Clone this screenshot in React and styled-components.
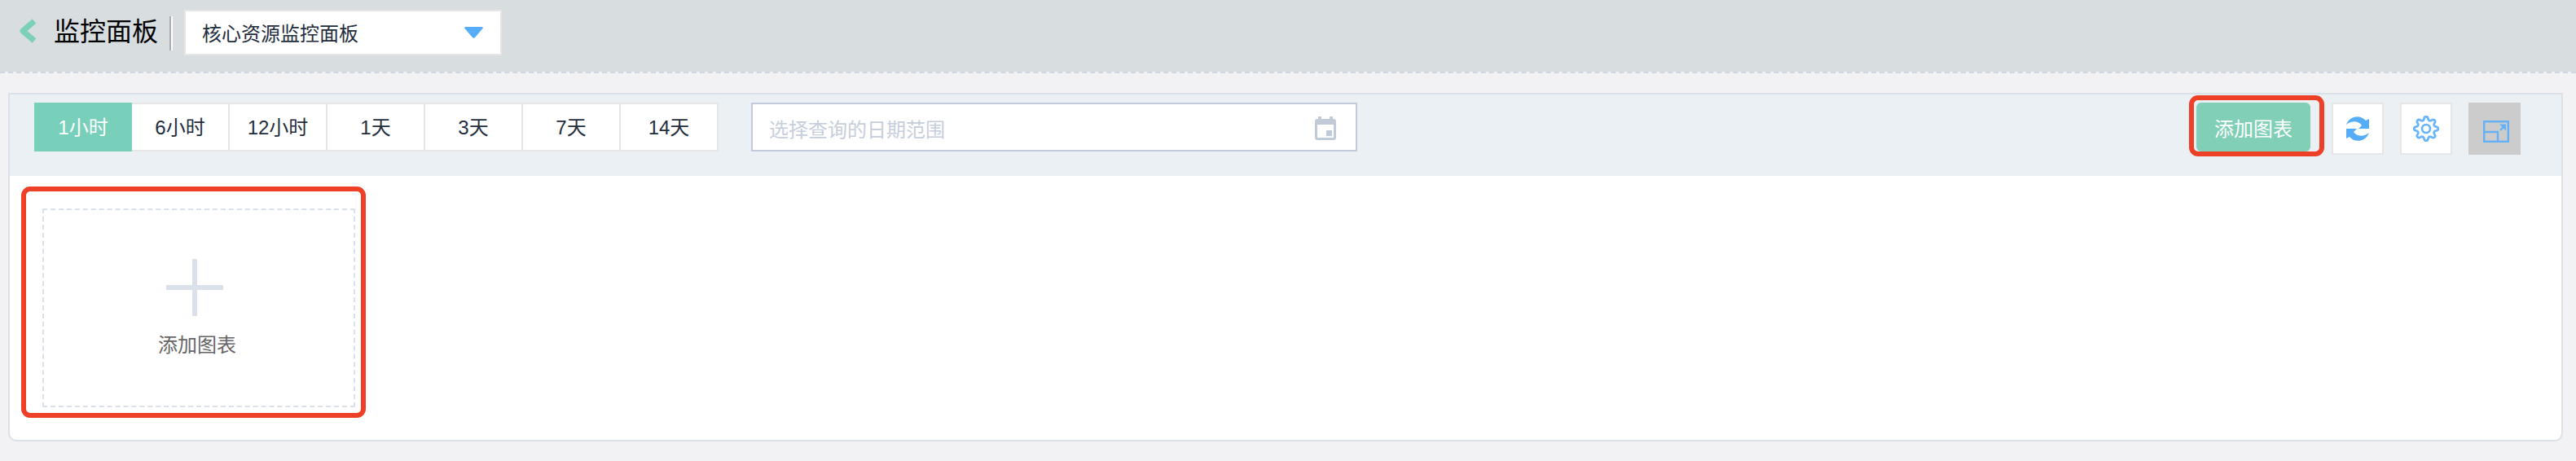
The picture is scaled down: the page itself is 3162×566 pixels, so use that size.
import React from "react";
import styled, { createGlobalStyle } from "styled-components";

const Global = createGlobalStyle`
  * { box-sizing: border-box; }
  body {
    margin: 0;
    background: #f2f2f4;
    font-family: "Liberation Sans", "Noto Sans CJK SC", sans-serif;
    font-size: 24px;
    color: #1f2d3d;
  }
  button { font: inherit; color: inherit; padding: 0; }
  svg { display: block; }
`;

const Page = styled.div`
  height: 566px;
  overflow: hidden;
`;

const Header = styled.header`
  display: flex;
  align-items: flex-start;
  height: 90px;
  padding: 12px 0 0 22px;
  background: #d8dde0 padding-box;
  border-bottom: 2px dashed #d0d7e0;
`;

const BackButton = styled.button`
  margin-top: 11px;
  width: 24px;
  height: 30px;
  border: 0;
  background: none;
`;

const Title = styled.h1`
  margin: 3px 0 0 20px;
  width: 128px;
  font-size: 32px;
  line-height: 48px;
  font-weight: 400;
  color: #000;
  white-space: nowrap;
`;

const Divider = styled.span`
  width: 4px;
  height: 42px;
  margin: 8px 14px 0 14px;
  border-left: 2px solid #a9adb0;
  border-right: 2px solid #fff;
`;

const Select = styled.div`
  display: flex;
  align-items: center;
  justify-content: space-between;
  width: 390px;
  height: 56px;
  padding: 0 21px 1px 20px;
  background: #fff;
  border: 2px solid #e6e6e8;
`;

const Panel = styled.main`
  height: 428px;
  margin: 24px 16px 0 10px;
  background: #fff;
  border: 2px solid #dae1e8;
  border-radius: 0 0 10px 10px;
`;

const Toolbar = styled.div`
  display: flex;
  align-items: flex-start;
  height: 100px;
  padding: 10px 50px 0 30px;
  background: #eaf0f4;
`;

const Segments = styled.div`
  display: flex;
`;

const Segment = styled.button`
  width: 120px;
  height: 60px;
  padding-bottom: 3px;
  border: 2px solid ${(p) => (p.$active ? "#78d0ba" : "#e6e6e6")};
  border-left-width: ${(p) => (p.$active ? "2px" : "0")};
  background: ${(p) => (p.$active ? "#78d0ba" : "#fff")};
  color: ${(p) => (p.$active ? "#fff" : "#1f2d3d")};
`;

const DateInput = styled.div`
  display: flex;
  align-items: center;
  justify-content: space-between;
  width: 744px;
  height: 60px;
  margin-left: 40px;
  padding: 2px 24px 0 20px;
  background: #fff;
  border: 2px solid #c0cad8;
  color: #c6cedb;
`;

const Actions = styled.div`
  display: flex;
  align-items: flex-start;
  gap: 20px;
  margin-left: auto;
`;

const Callout = styled.div`
  position: relative;
  &::after {
    content: "";
    position: absolute;
    inset: ${(p) => p.$inset};
    border: 6px solid #ee4026;
    border-radius: 11px;
    pointer-events: none;
  }
`;

const PrimaryButton = styled.button`
  display: block;
  width: 140px;
  height: 60px;
  margin-right: 6px;
  border: 0;
  border-radius: 6px;
  background: #80cfb6;
  color: #fff;
`;

const IconButton = styled.button`
  display: flex;
  align-items: center;
  justify-content: center;
  width: 64px;
  height: 64px;
  padding-top: ${(p) => (p.$active ? "6px" : "0")};
  padding-left: ${(p) => (p.$active ? "4px" : "0")};
  border: 2px solid ${(p) => (p.$active ? "#ccc" : "#e6e6e6")};
  background: ${(p) => (p.$active ? "#ccc" : "#fff")};
`;

const Content = styled.section`
  display: flex;
  padding: 40px;
`;

const AddCard = styled.div`
  display: flex;
  flex-direction: column;
  align-items: center;
  width: 384px;
  height: 244px;
  padding-top: 60px;
  border: 2px dashed #dae1ea;
  color: #666;
`;

const PlusIcon = styled.svg`
  margin-right: 10px;
`;

const CardLabel = styled.span`
  margin: 18px 4px 0 0;
  line-height: 36px;
`;

const ranges = ["1小时", "6小时", "12小时", "1天", "3天", "7天", "14天"];

const gearPath = (() => {
  const points = [];
  const steps = 96;
  for (let i = 0; i < steps; i++) {
    const a = (i / steps) * Math.PI * 2;
    const wave = Math.tanh(1.6 * Math.cos(8 * a)) / Math.tanh(1.6);
    const r = 12.7 + 2 * wave;
    points.push(`${(16 + r * Math.sin(a)).toFixed(2)} ${(16 - r * Math.cos(a)).toFixed(2)}`);
  }
  return `M${points.join("L")}Z`;
})();

export default function App() {
  return (
    <Page>
      <Global />
      <Header>
        <BackButton aria-label="返回">
          <svg width="24" height="30" viewBox="0 0 24 30" fill="none" stroke="#7dd0b8" strokeWidth="7">
            <path d="M20 3 6 15 20 27" strokeLinejoin="round" />
          </svg>
        </BackButton>
        <Title>监控面板</Title>
        <Divider />
        <Select>
          核心资源监控面板
          <svg width="23" height="14" viewBox="0 0 23 14" fill="#55acf9">
            <path d="M1.5 0h20q2 .5 1 2L13 13q-1.5 1.500-3 0L.5 2q-1-1.500 1-2Z" />
          </svg>
        </Select>
      </Header>
      <Panel>
        <Toolbar>
          <Segments>
            {ranges.map((label, i) => (
              <Segment key={label} $active={i === 0}>{label}</Segment>
            ))}
          </Segments>
          <DateInput>
            选择查询的日期范围
            <svg width="26" height="29" viewBox="0 0 26 29" fill="#c0cad8" fillRule="evenodd">
              <path d="M4 0h4v3h10V0h4v3h1q3 0 3 3v20q0 3-3 3H3q-3 0-3-3V6q0-3 3-3h1ZM3 10v16h20V10Z" />
              <path d="M14 17h7v7h-7Z" />
            </svg>
          </DateInput>
          <Actions>
            <Callout $inset="-9px -11px -6px -9px">
              <PrimaryButton>添加图表</PrimaryButton>
            </Callout>
            <IconButton aria-label="刷新">
              <svg width="28" height="30" viewBox="0 0 28 30" fill="#55acf9">
                <path d="M0 10C4-1 17-3 24 5l4-2v12H15l4-4C15 5 6 5 0 10Z" />
                <path d="M28 20C24 31 11 33 4 25l-4 2V15h13l-4 4c4 6 13 6 19 1Z" />
              </svg>
            </IconButton>
            <IconButton aria-label="设置">
              <svg width="32" height="32" viewBox="0 0 32 32" fill="none" stroke="#68b4fa" strokeWidth="2.7">
                <path d={gearPath} strokeLinejoin="round" />
                <circle cx="16" cy="16" r="5" />
              </svg>
            </IconButton>
            <IconButton $active aria-label="全屏">
              <svg width="32" height="27" viewBox="0 0 32 27" fill="none" stroke="#63b1f7" strokeWidth="2.4">
                <rect x="1.200" y="1.200" width="29.600" height="24.600" />
                <path d="M1 14h17v12M21 12l6-6" />
                <path d="M20 4.500h8v8Z" fill="#63b1f7" stroke="none" />
              </svg>
            </IconButton>
          </Actions>
        </Toolbar>
        <Content>
          <Callout $inset="-27px -13px -13px -26px">
            <AddCard>
              <PlusIcon width="70" height="70" viewBox="0 0 70 70" stroke="#dae1ea" strokeWidth="6">
                <path d="M35 0V70M0 35H70" />
              </PlusIcon>
              <CardLabel>添加图表</CardLabel>
            </AddCard>
          </Callout>
        </Content>
      </Panel>
    </Page>
  );
}
